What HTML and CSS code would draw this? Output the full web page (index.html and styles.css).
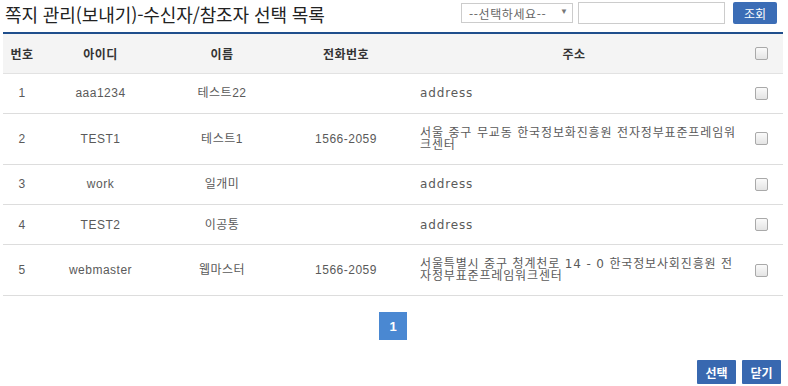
FILE: index.html
```html
<!DOCTYPE html>
<html lang="ko">
<head>
    <meta charset="UTF-8">
    <title>쪽지 관리(보내기)-수신자/참조자 선택 목록</title>
    <link rel="stylesheet" href="styles.css">
</head>
<body>
    <div class="popup">
        <div class="top">
            <h1 class="title">쪽지 관리(보내기)-수신자/참조자 선택 목록</h1>
            <div class="search">
                <div class="select-wrap">
                    <select class="search-select">
                        <option>--선택하세요--</option>
                        <option>아이디</option>
                        <option>이름</option>
                    </select>
                    <span class="select-arrow">&#9660;</span>
                </div>
                <input type="text" class="search-input">
                <button class="btn btn-search">조회</button>
            </div>
        </div>

        <table class="list">
            <colgroup>
                <col class="c-no">
                <col class="c-id">
                <col class="c-name">
                <col class="c-tel">
                <col class="c-addr">
                <col class="c-chk">
            </colgroup>
            <thead>
                <tr>
                    <th>번호</th>
                    <th>아이디</th>
                    <th>이름</th>
                    <th>전화번호</th>
                    <th>주소</th>
                    <th><input type="checkbox" class="chk"></th>
                </tr>
            </thead>
            <tbody>
                <tr>
                    <td>1</td>
                    <td>aaa1234</td>
                    <td>테스트22</td>
                    <td></td>
                    <td class="addr">address</td>
                    <td><input type="checkbox" class="chk"></td>
                </tr>
                <tr>
                    <td>2</td>
                    <td>TEST1</td>
                    <td>테스트1</td>
                    <td>1566-2059</td>
                    <td class="addr">서울 중구 무교동 한국정보화진흥원 전자정부표준프레임워크센터</td>
                    <td><input type="checkbox" class="chk"></td>
                </tr>
                <tr>
                    <td>3</td>
                    <td>work</td>
                    <td>일개미</td>
                    <td></td>
                    <td class="addr">address</td>
                    <td><input type="checkbox" class="chk"></td>
                </tr>
                <tr>
                    <td>4</td>
                    <td>TEST2</td>
                    <td>이공통</td>
                    <td></td>
                    <td class="addr">address</td>
                    <td><input type="checkbox" class="chk"></td>
                </tr>
                <tr>
                    <td>5</td>
                    <td>webmaster</td>
                    <td>웹마스터</td>
                    <td>1566-2059</td>
                    <td class="addr">서울특별시 중구 청계천로 14 - 0 한국정보사회진흥원 전자정부표준프레임워크센터</td>
                    <td><input type="checkbox" class="chk"></td>
                </tr>
            </tbody>
        </table>

        <div class="paging">
            <a class="page on">1</a>
        </div>

        <div class="actions">
            <button class="btn btn-act">선택</button>
            <button class="btn btn-act">닫기</button>
        </div>
    </div>
</body>
</html>
```

FILE: styles.css
```css
* {
    box-sizing: border-box;
}

body {
    margin: 0;
    padding: 0 3px;
    background-color: #fff;
    font-family: 'Liberation Sans', 'Noto Sans CJK KR', sans-serif;
    font-size: 12px;
    color: #5a5a5a;
}

.popup {
    width: 780px;
}

.top {
    display: flex;
    justify-content: space-between;
    align-items: flex-start;
    height: 32px;
}

.title {
    margin: 0;
    padding: 2px 0 0 2px;
    font-family: 'Noto Sans CJK KR', sans-serif;
    font-size: 18px;
    line-height: 24px;
    font-weight: normal;
    color: #222;
    letter-spacing: -0.1px;
}

.search {
    display: flex;
    align-items: center;
    padding-top: 2px;
}

.select-wrap {
    position: relative;
    width: 112px;
    height: 20px;
}

.search-select {
    appearance: none;
    -webkit-appearance: none;
    width: 100%;
    height: 100%;
    padding: 0 0 0 7px;
    border: 1px solid #ccc;
    background-color: #fff;
    font-family: 'Noto Sans CJK KR', sans-serif;
    font-size: 12px;
    letter-spacing: 0.6px;
    color: #666;
    border-radius: 0;
}

.select-arrow {
    position: absolute;
    right: 5px;
    top: 4px;
    font-size: 8px;
    color: #777;
    pointer-events: none;
}

.search-input {
    width: 147px;
    height: 22px;
    margin-left: 5px;
    border: 1px solid #ccc;
    padding: 2px 4px;
}

.btn {
    border: none;
    color: #fff;
    cursor: pointer;
    font-family: 'Noto Sans CJK KR', sans-serif;
    border-radius: 2px;
}

.btn-search {
    width: 44px;
    height: 22px;
    margin-left: 8px;
    margin-right: 6px;
    background-color: #3b6db6;
    font-size: 12px;
}

.list {
    width: 780px;
    border-collapse: collapse;
    border-top: 2px solid #1f4e8c;
    table-layout: fixed;
}

.c-no { width: 38px; }
.c-id { width: 119px; }
.c-name { width: 124px; }
.c-tel { width: 124px; }
.c-addr { width: 332px; }
.c-chk { width: 43px; }

.list th {
    height: 40px;
    background-color: #f4f4f4;
    border-bottom: 1px solid #e2e2e2;
    font-weight: bold;
    color: #333;
    text-align: center;
    font-size: 12px;
    letter-spacing: 0.5px;
}

.list td {
    padding: 13px 0;
    line-height: 12px;
    text-align: center;
    border-bottom: 1px solid #ddd;
    vertical-align: middle;
    letter-spacing: 0.5px;
}

.list td.addr {
    text-align: left;
    padding-left: 12px;
    padding-right: 0;
    word-break: break-all;
    font-family: 'DejaVu Sans', 'Noto Sans CJK KR', sans-serif;
    letter-spacing: 0.85px;
}

.chk {
    appearance: none;
    -webkit-appearance: none;
    width: 13px;
    height: 13px;
    margin: 0;
    border: 1px solid #a9a9a9;
    border-radius: 2px;
    background: linear-gradient(#fafafa, #e4e4e4);
    vertical-align: middle;
}

.paging {
    display: flex;
    justify-content: center;
    padding-top: 16px;
}

.page {
    display: flex;
    align-items: center;
    justify-content: center;
    width: 28px;
    height: 28px;
    background-color: #4a88d2;
    color: #fff;
    font-size: 13px;
    font-weight: bold;
}

.actions {
    display: flex;
    justify-content: flex-end;
    gap: 6px;
    padding-top: 20px;
    padding-right: 2px;
}

.btn-act {
    width: 39px;
    height: 24px;
    background-color: #3868b0;
    font-size: 12px;
    font-weight: bold;
    border-radius: 1px;
}
```
